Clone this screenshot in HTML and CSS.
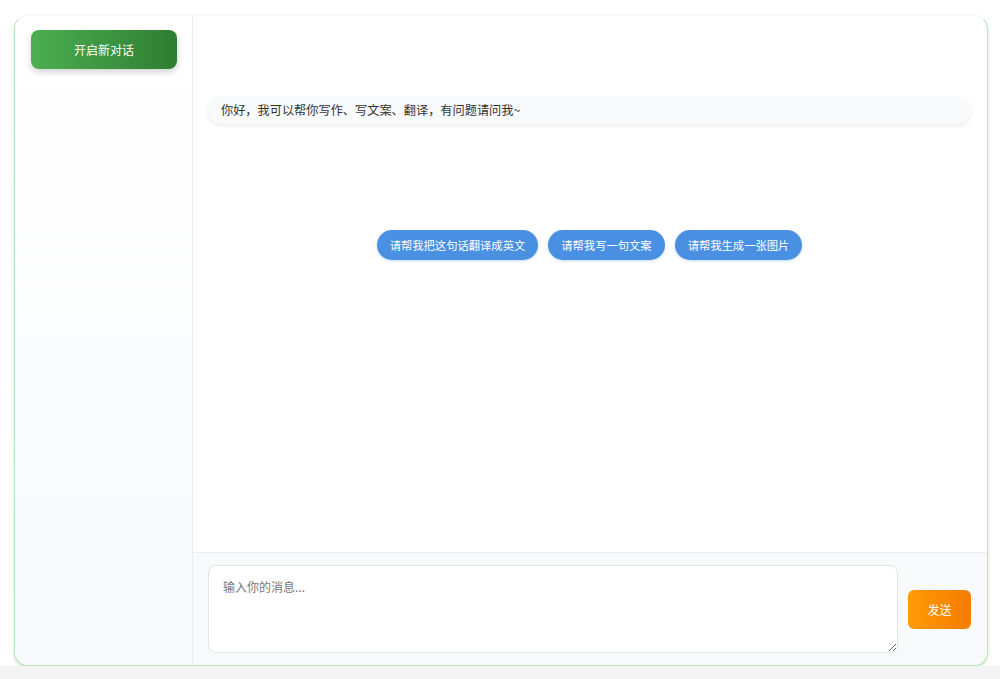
FILE: index.html
```html
<!DOCTYPE html>
<html lang="zh">
<head>
<meta charset="utf-8">
<link rel="stylesheet" href="styles.css">
</head>
<body>
<div class="page">
  <div class="app">
    <aside class="sidebar">
      <button class="new-chat">开启新对话</button>
    </aside>
    <main class="main">
      <section class="messages">
        <div class="bubble">你好，我可以帮你写作、写文案、翻译，有问题请问我~</div>
        <div class="suggestions">
          <button class="chip">请帮我把这句话翻译成英文</button>
          <button class="chip">请帮我写一句文案</button>
          <button class="chip">请帮我生成一张图片</button>
        </div>
      </section>
      <footer class="composer">
        <textarea class="input" placeholder="输入你的消息..."></textarea>
        <button class="send">发送</button>
      </footer>
    </main>
  </div>
</div>
<div class="bottom-strip"></div>
</body>
</html>
```

FILE: styles.css
```css
* { box-sizing: border-box; }
html, body { margin: 0; padding: 0; }
body {
  background: #fff;
  font-family: "Noto Sans CJK SC", "Noto Sans", sans-serif;
  color: #333;
  height: 679px;
  overflow: hidden;
}
.page {
  padding: 15px 12px 0 14px;
  height: 666px;
}
.app {
  height: 651px;
  display: flex;
  border: 1.5px solid #b9e3ba;
  border-top-color: #f6fbf6;
  border-radius: 14px;
  box-shadow: 0 2px 3px rgba(76, 175, 80, 0.3);
  overflow: hidden;
  background: #fff;
}
.sidebar {
  width: 178px;
  flex: none;
  background: linear-gradient(180deg, #ffffff 0%, #f8f9fb 100%);
  border-right: 1px solid #ececec;
  padding: 14px 0 0 16px;
}
.new-chat {
  width: 146px;
  height: 39px;
  border: none;
  border-radius: 8px;
  background: linear-gradient(90deg, #4caf50 0%, #2e7d32 100%);
  color: #fff;
  font-family: inherit;
  font-size: 12px;
  box-shadow: 0 3px 6px rgba(0, 0, 0, 0.18);
}
.main {
  flex: 1;
  display: flex;
  flex-direction: column;
  min-width: 0;
}
.messages {
  flex: 1;
  padding: 80px 16px 0 15px;
}
.bubble {
  height: 28px;
  line-height: 28px;
  padding: 0 13px;
  background: #f9fafc;
  border-radius: 14px;
  box-shadow: 0 2px 4px rgba(0, 0, 0, 0.08);
  font-size: 12.2px;
  color: #333;
}
.suggestions {
  display: flex;
  justify-content: center;
  gap: 10px;
  margin-top: 106px;
}
.chip {
  height: 30px;
  padding: 0 13px;
  border: none;
  border-radius: 15px;
  background: #4a90e2;
  color: #fff;
  font-family: inherit;
  font-size: 11.3px;
  box-shadow: 0 1px 3px rgba(74, 144, 226, 0.35);
}
.composer {
  height: 113px;
  flex: none;
  background: #f8f9fa;
  border-top: 1px solid #ececec;
  display: flex;
  align-items: center;
  gap: 10px;
  padding: 12px 16px 12px 15px;
}
.input {
  flex: 1;
  height: 88px;
  border: 1px solid #e3e3e3;
  border-radius: 8px;
  background: #fff;
  padding: 12px 14px;
  font-family: inherit;
  font-size: 12px;
  color: #333;
  resize: vertical;
}
.input::placeholder { color: #777; }
.send {
  width: 63px;
  height: 39px;
  border: none;
  border-radius: 6px;
  background: linear-gradient(90deg, #ff9a06 0%, #f57c00 100%);
  color: #fff;
  font-family: inherit;
  font-size: 12px;
}
.bottom-strip {
  height: 13px;
  background: #f4f4f4;
}
```
